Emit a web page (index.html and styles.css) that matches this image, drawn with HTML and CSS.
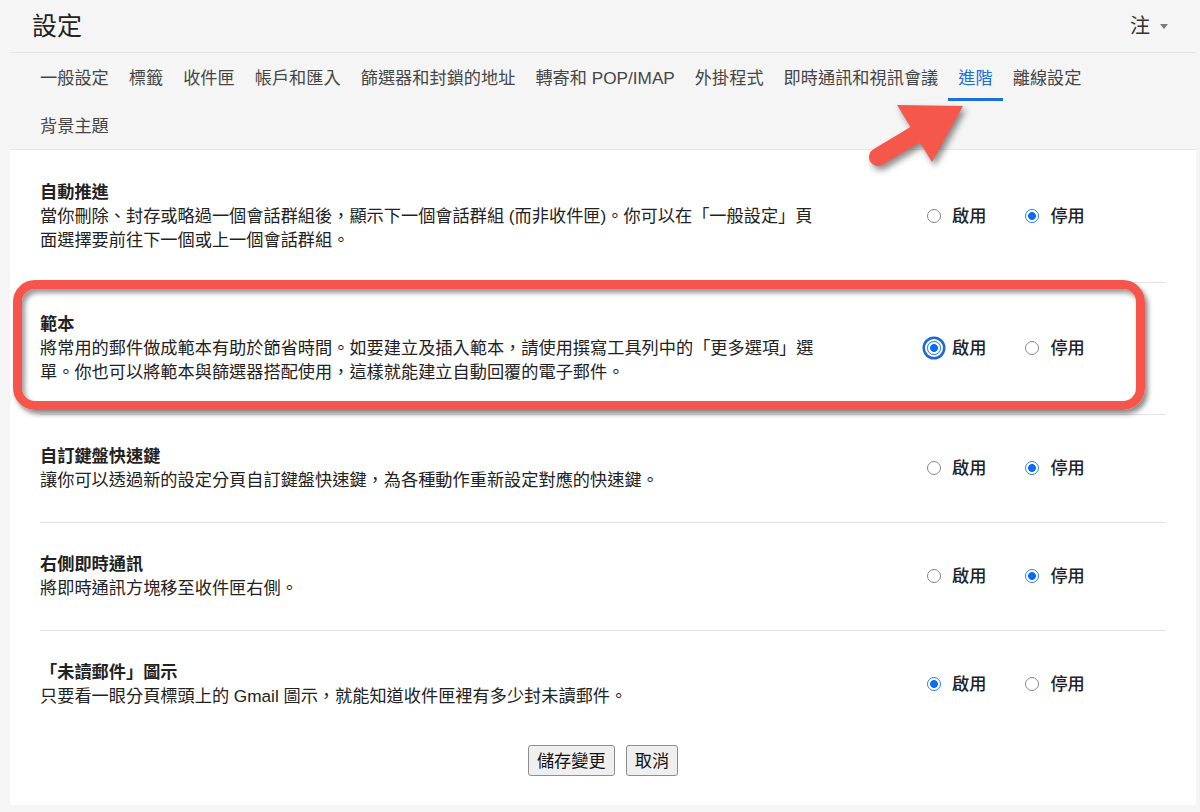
FILE: index.html
```html
<!DOCTYPE html>
<html lang="zh-Hant">
<head>
<meta charset="utf-8">
<title>設定</title>
<link rel="stylesheet" href="styles.css">
</head>
<body>
<div class="page">
  <header class="topbar">
    <h1 class="title">設定</h1>
    <div class="account">注<span class="caret"></span></div>
  </header>

  <nav class="tabs">
    <a class="tab">一般設定</a>
    <a class="tab">標籤</a>
    <a class="tab">收件匣</a>
    <a class="tab">帳戶和匯入</a>
    <a class="tab">篩選器和封鎖的地址</a>
    <a class="tab">轉寄和 POP/IMAP</a>
    <a class="tab">外掛程式</a>
    <a class="tab">即時通訊和視訊會議</a>
    <a class="tab active">進階</a>
    <a class="tab">離線設定</a>
    <a class="tab">背景主題</a>
  </nav>

  <main class="panel">
    <section class="row">
      <div class="info">
        <div class="name">自動推進</div>
        <div class="desc">當你刪除、封存或略過一個會話群組後，顯示下一個會話群組 (而非收件匣)。你可以在「一般設定」頁面選擇要前往下一個或上一個會話群組。</div>
      </div>
      <div class="choices">
        <label class="opt"><input type="radio" class="radio" name="r1">啟用</label>
        <label class="opt"><input type="radio" class="radio" name="r1" checked>停用</label>
      </div>
    </section>
    <section class="row">
      <div class="info">
        <div class="name">範本</div>
        <div class="desc">將常用的郵件做成範本有助於節省時間。如要建立及插入範本，請使用撰寫工具列中的「更多選項」選單。你也可以將範本與篩選器搭配使用，這樣就能建立自動回覆的電子郵件。</div>
      </div>
      <div class="choices">
        <label class="opt"><input type="radio" class="radio focused" name="r2" checked>啟用</label>
        <label class="opt"><input type="radio" class="radio" name="r2">停用</label>
      </div>
    </section>
    <section class="row">
      <div class="info">
        <div class="name">自訂鍵盤快速鍵</div>
        <div class="desc">讓你可以透過新的設定分頁自訂鍵盤快速鍵，為各種動作重新設定對應的快速鍵。</div>
      </div>
      <div class="choices">
        <label class="opt"><input type="radio" class="radio" name="r3">啟用</label>
        <label class="opt"><input type="radio" class="radio" name="r3" checked>停用</label>
      </div>
    </section>
    <section class="row">
      <div class="info">
        <div class="name">右側即時通訊</div>
        <div class="desc">將即時通訊方塊移至收件匣右側。</div>
      </div>
      <div class="choices">
        <label class="opt"><input type="radio" class="radio" name="r4">啟用</label>
        <label class="opt"><input type="radio" class="radio" name="r4" checked>停用</label>
      </div>
    </section>
    <section class="row last">
      <div class="info">
        <div class="name">「未讀郵件」圖示</div>
        <div class="desc">只要看一眼分頁標頭上的 Gmail 圖示，就能知道收件匣裡有多少封未讀郵件。</div>
      </div>
      <div class="choices">
        <label class="opt"><input type="radio" class="radio" name="r5" checked>啟用</label>
        <label class="opt"><input type="radio" class="radio" name="r5">停用</label>
      </div>
    </section>
    <div class="actions">
      <button class="btn">儲存變更</button>
      <button class="btn">取消</button>
    </div>
  </main>

  <div class="highlight"></div>
  <svg class="arrow" width="115" height="80" viewBox="0 0 115 80">
    <line x1="18" y1="62" x2="58" y2="38" stroke="#f5574b" stroke-width="18" stroke-linecap="round"/>
    <polygon points="103,11 37,10 72,67" fill="#f5574b"/>
  </svg>
</div>
</body>
</html>
```

FILE: styles.css
```css
html, body {
  margin: 0;
  padding: 0;
}
body {
  background: #f5f5f5;
  font-family: "Liberation Sans", "Noto Sans CJK TC", sans-serif;
  color: #222;
  width: 1200px;
  height: 812px;
  overflow: hidden;
}
.page {
  position: relative;
  width: 1200px;
  height: 812px;
}
.topbar {
  margin: 0 4px 0 10px;
  height: 52px;
  border-bottom: 1px solid #e4e4e4;
  display: flex;
  align-items: center;
  justify-content: space-between;
  padding: 0 28px 0 22px;
}
.title {
  margin: 0;
  font-size: 25px;
  font-weight: 400;
  color: #222;
  line-height: 30px;
}
.account {
  display: flex;
  align-items: center;
  font-size: 20px;
  color: #333;
  line-height: 24px;
}
.caret {
  width: 0;
  height: 0;
  border-left: 4px solid transparent;
  border-right: 4px solid transparent;
  border-top: 5px solid #7a7a7a;
  margin-left: 10px;
}
.tabs {
  margin: 0 4px 0 10px;
  padding: 0 80px 0 20px;
  display: flex;
  flex-wrap: wrap;
  border-bottom: 1px solid #e6e6e6;
}
.tab {
  height: 48px;
  box-sizing: border-box;
  display: flex;
  align-items: center;
  padding: 1px 10px 0;
  font-size: 17.2px;
  color: #454545;
  border-bottom: 3px solid transparent;
}
.tab.active {
  color: #1a6fdc;
  border-bottom-color: #1a6fdc;
}
.panel {
  margin: 0 4px 0 10px;
  background: #fff;
  padding: 0 30px;
  height: 655px;
  box-sizing: border-box;
}
.row {
  display: flex;
  align-items: center;
  padding: 30px 0;
  border-bottom: 1px solid #e3e3e3;
}
.row:first-child {
  padding-top: 31px;
}
.row.last {
  border-bottom: none;
  padding-bottom: 0;
}
.info {
  flex: 1;
  min-width: 0;
}
.name {
  font-size: 17.2px;
  font-weight: 700;
  line-height: 23px;
  color: #222;
}
.desc {
  max-width: 780px;
  font-size: 17.2px;
  line-height: 24px;
  color: #222;
}
.choices {
  width: 239px;
  flex: none;
  display: flex;
  gap: 39px;
  margin-top: -2px;
}
.opt {
  display: flex;
  align-items: center;
  gap: 11px;
  font-size: 17.2px;
  font-weight: 500;
  color: #222;
  line-height: 24px;
}
.radio {
  appearance: none;
  -webkit-appearance: none;
  margin: 0;
  width: 14px;
  height: 14px;
  box-sizing: border-box;
  border-radius: 50%;
  border: 1px solid #858585;
  background: #fff;
  flex: none;
}
.radio:checked {
  border: 1.5px solid #2a7ef0;
  background: radial-gradient(circle, #0a6cf4 0, #0a6cf4 3.6px, #fff 4.2px);
}
.radio.focused {
  box-shadow: 0 0 0 2px #fff, 0 0 0 4.5px #1c68d8;
}
.actions {
  display: flex;
  justify-content: center;
  gap: 11px;
  padding-top: 37px;
}
.btn {
  height: 31px;
  padding: 0 8px;
  border: 1px solid #8d8d8d;
  border-radius: 3px;
  background: #efefef;
  font-family: "Liberation Sans", "Noto Sans CJK TC", sans-serif;
  font-size: 17.2px;
  color: #111;
  line-height: 24px;
}
.highlight {
  position: absolute;
  left: 13px;
  top: 280px;
  width: 1132px;
  height: 130px;
  box-sizing: border-box;
  border: 9px solid #f5554a;
  border-radius: 22px;
  box-shadow: 3px 4px 5px rgba(0, 0, 0, 0.45), inset 3px 4px 5px rgba(0, 0, 0, 0.4);
  pointer-events: none;
}
.arrow {
  position: absolute;
  left: 860px;
  top: 95px;
  filter: drop-shadow(3px 4px 3px rgba(0, 0, 0, 0.45));
}
```
